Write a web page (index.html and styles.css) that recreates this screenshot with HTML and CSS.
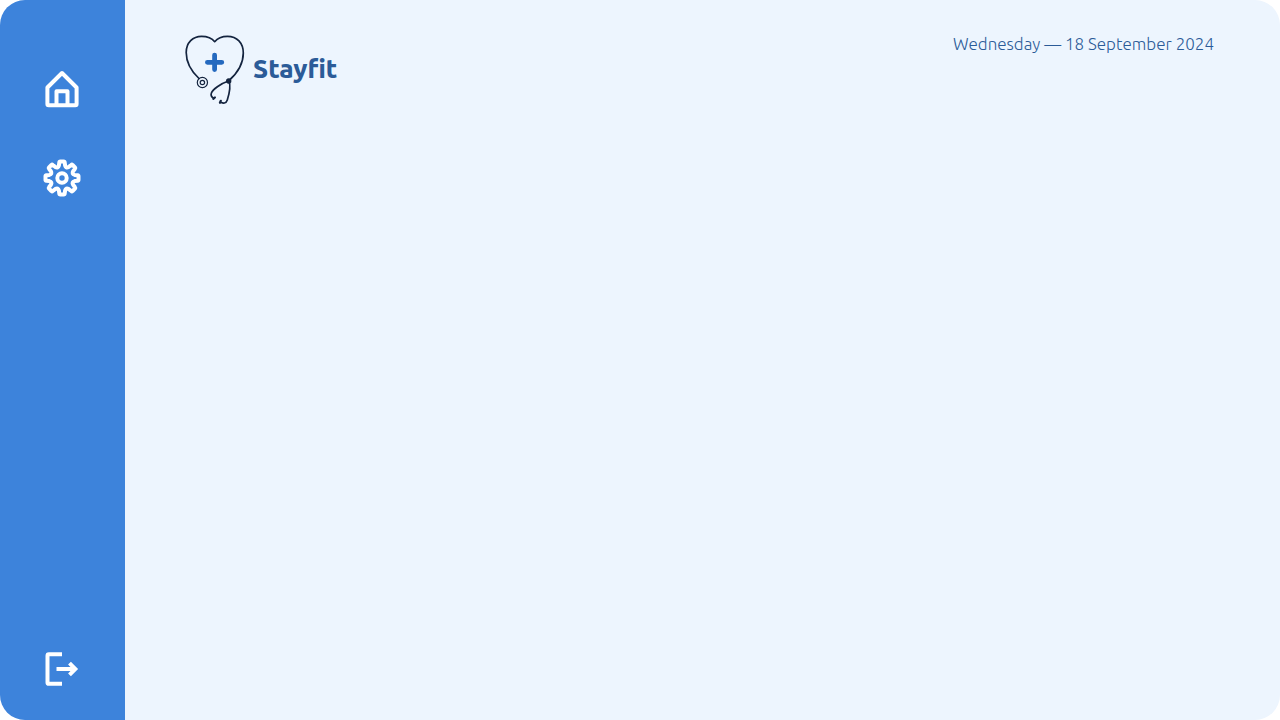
FILE: index.html
```html
<!DOCTYPE html>
<html lang="en">
<head>
<meta charset="utf-8">
<meta name="viewport" content="width=device-width, initial-scale=1">
<title>Stayfit</title>
<link rel="stylesheet" href="styles.css">
</head>
<body>
<div class="app">
  <nav class="sidebar" aria-label="Main">
    <a class="nav-link" href="#home" aria-label="Home">
      <svg class="icon" viewBox="0 0 40 40" aria-hidden="true"><path d="M5.400 34V17.500L20 3l14.600 14.500V34Q34.600 35.300 33.300 35.300H6.700Q5.400 35.300 5.400 34Z"/><path d="M14.500 35V21.300h11V35"/></svg>
    </a>
    <a class="nav-link" href="#settings" aria-label="Settings">
      <svg class="icon" viewBox="-20 -20 40 40" aria-hidden="true"><path d="M-1.700-16.500H1.700Q2.600-16.500 2.700-15.600L3.100-12.600Q3.900-9.500 6.700-11.100L9.200-13Q9.900-13.600 10.600-13L13-10.600Q13.600-9.900 13-9.200L11.100-6.700Q9.500-3.900 12.600-3.100L15.600-2.700Q16.500-2.600 16.500-1.700V1.700Q16.500 2.600 15.600 2.700L12.600 3.100Q9.500 3.900 11.100 6.700L13 9.200Q13.600 9.900 13 10.600L10.600 13Q9.900 13.600 9.200 13L6.700 11.100Q3.900 9.500 3.100 12.600L2.700 15.600Q2.600 16.500 1.700 16.500H-1.700Q-2.600 16.500-2.700 15.600L-3.100 12.600Q-3.900 9.500-6.700 11.100L-9.200 13Q-9.900 13.600-10.600 13L-13 10.600Q-13.600 9.900-13 9.200L-11.100 6.700Q-9.500 3.900-12.600 3.100L-15.600 2.700Q-16.500 2.600-16.500 1.700V-1.700Q-16.500-2.600-15.600-2.700L-12.600-3.100Q-9.500-3.900-11.100-6.700L-13-9.200Q-13.600-9.900-13-10.600L-10.600-13Q-9.900-13.600-9.200-13L-6.700-11.100Q-3.900-9.500-3.100-12.600L-2.700-15.600Q-2.600-16.500-1.700-16.500Z"/><circle r="4.700"/></svg>
    </a>
    <button class="nav-link logout" type="button" aria-label="Log out">
      <svg class="icon" viewBox="0 0 40 40" aria-hidden="true"><path class="butt" d="M20 5.300H6.900Q5.500 5.300 5.500 6.700v26.700Q5.500 34.800 6.900 34.800H20"/><path class="butt" d="M14.500 20H33"/><path class="miter" d="M27.500 14.200L33.300 20l-5.800 5.800"/></svg>
    </button>
  </nav>
  <div class="page">
    <header class="header">
      <a class="brand" href="#home">
        <svg class="logo" viewBox="0 -1 60 70" aria-hidden="true">
          <path class="line" d="M14 43.500C6 36 1.200 27 1.200 17.500C1.200 7.500 8 1.300 16.500 1.300C22 1.300 27 3.200 29.700 6.700C32.500 3.200 37 1.300 42.500 1.300C52 1.300 58.300 8 58.300 18C58.300 29 52.500 38 44 45.500"/>
          <path class="cross" d="M29.600 20.100v14.400M22.400 27.300h14.400"/>
          <circle class="thin" cx="17.400" cy="47.500" r="5.100"/>
          <circle class="thin" cx="17.400" cy="47.500" r="2.200"/>
          <path class="line" d="M43.500 46C36 48.500 28 54 26.400 58C25.700 60 26.500 62 28.500 63M44 46C45.500 50 44.500 58 42.300 65C41 69 38 68.300 35.700 67.300"/>
          <path class="tip" d="M28.300 63.800l1.600-1.300M34.900 67.800l.900-2"/>
          <circle class="joint" cx="43.700" cy="46" r="2.700"/>
        </svg>
        <span class="name">Stayfit</span>
      </a>
      <time class="date" datetime="2024-09-18">Wednesday — 18 September 2024</time>
    </header>
    <main class="content"></main>
  </div>
</div>
</body>
</html>
```
FILE: styles.css
```css
* { box-sizing: border-box; }
body { margin: 0; background: #fff; font-family: Ubuntu, "Noto Sans", "Open Sans", sans-serif; }
.app { display: flex; min-height: 100vh; border-radius: 25px; overflow: hidden; background: #edf5fe; }
.sidebar { display: flex; flex-direction: column; align-items: flex-start; gap: 48px; width: 125px; padding: 70px 0 31px 42px; background: #3d83db; }
.nav-link { display: block; width: 40px; height: 40px; padding: 0; border: 0; background: none; cursor: pointer; }
.logout { margin-top: auto; }
.icon { display: block; width: 40px; height: 40px; fill: none; stroke: #fff; stroke-width: 4; stroke-linejoin: round; }
.butt { stroke-linecap: butt; }
.miter { stroke-linejoin: miter; }
.page { flex: 1; display: flex; flex-direction: column; }
.header { display: flex; justify-content: space-between; align-items: flex-start; padding: 34px 66px 0 60px; color: #2b5b98; }
.brand { display: flex; align-items: center; gap: 8px; color: inherit; text-decoration: none; }
.logo { width: 60px; height: 70px; overflow: visible; fill: none; stroke: #14243f; stroke-linecap: round; stroke-linejoin: round; }
.line { stroke-width: 1.7; }
.thin { stroke-width: 1.2; }
.tip { stroke-width: 2.2; }
.joint { fill: #14243f; stroke: none; }
.cross { stroke: #2469bf; stroke-width: 4.8; }
.name { font-size: 26px; line-height: 36px; font-weight: 800; }
.date { font-size: 17px; line-height: 20px; font-weight: 300; white-space: nowrap; }
.content { flex: 1; }
```
